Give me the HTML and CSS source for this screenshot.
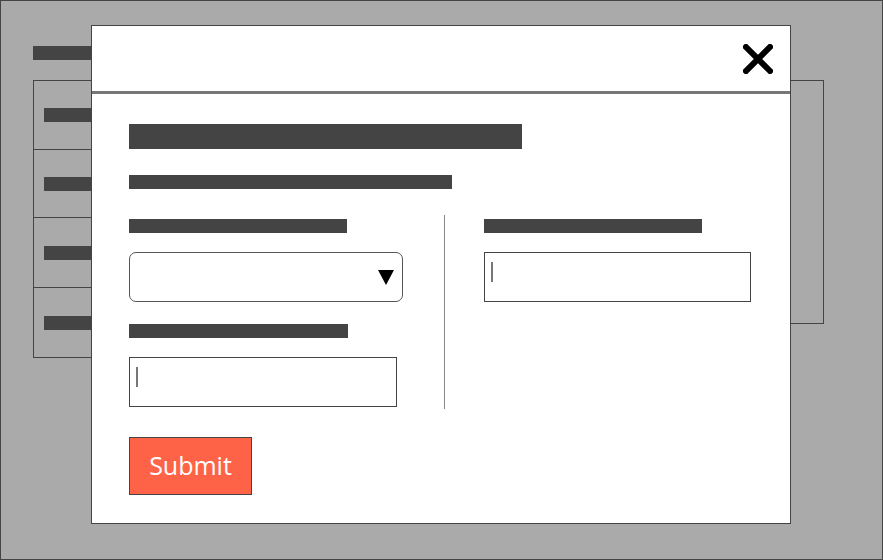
FILE: index.html
```html
<!DOCTYPE html>
<html lang="en">
<head>
<meta charset="utf-8">
<title>Modal form</title>
<link rel="stylesheet" href="styles.css">
</head>
<body>
<div class="screen">
  <div class="page">
    <div class="page-heading"></div>
    <div class="content">
      <div class="table">
        <div class="row r1"><span class="cell-bar"></span></div>
        <div class="row r2"><span class="cell-bar"></span></div>
        <div class="row r3"><span class="cell-bar"></span></div>
        <div class="row r4"><span class="cell-bar"></span></div>
      </div>
      <div class="side-panel"></div>
    </div>
  </div>

  <div class="modal">
    <div class="modal-header">
      <button class="close" aria-label="Close">
        <svg width="30" height="30" viewBox="0 0 30 30"><path d="M3 3 L27 27 M27 3 L3 27" stroke="#000" stroke-width="6" stroke-linecap="square" fill="none"/></svg>
      </button>
    </div>
    <div class="modal-body">
      <div class="title-bar"></div>
      <div class="subtitle-bar"></div>
      <div class="columns">
        <div class="col col-left">
          <div class="label-bar"></div>
          <div class="select">
            <svg class="caret" width="16" height="15" viewBox="0 0 16 15"><polygon points="0,0 16,0 8,15" fill="#000"/></svg>
          </div>
          <div class="label-bar label-2"></div>
          <div class="input input-left"><span class="cursor"></span></div>
        </div>
        <div class="divider"></div>
        <div class="col col-right">
          <div class="label-bar"></div>
          <div class="input input-right"><span class="cursor"></span></div>
        </div>
      </div>
      <button class="submit">Submit</button>
    </div>
  </div>
</div>
</body>
</html>
```

FILE: styles.css
```css
* { box-sizing: border-box; }
html, body { margin: 0; padding: 0; }
body { font-family: "Open Sans", "Noto Sans", sans-serif; }

.screen {
  position: relative;
  width: 883px;
  height: 560px;
  background: #aaaaaa;
  border: 1px solid #444444;
  overflow: hidden;
}

.page {
  padding: 45px 0 0 32px;
}
.page-heading {
  width: 120px;
  height: 14px;
  background: #444444;
}
.content {
  margin-top: 20px;
  width: 791px;
  display: flex;
  justify-content: space-between;
  align-items: flex-start;
}
.table {
  width: 200px;
  border: 1px solid #444444;
  border-top: none;
}
.row {
  display: flex;
  align-items: center;
  padding-left: 10px;
  border-top: 1px solid #444444;
}
.r1 { height: 69px; }
.r2 { height: 68px; }
.r3 { height: 70px; }
.r4 { height: 70px; }
.cell-bar {
  display: block;
  width: 60px;
  height: 14px;
  background: #444444;
}
.side-panel {
  width: 150px;
  height: 244px;
  border: 1px solid #444444;
}

.modal {
  position: absolute;
  left: 90px;
  top: 24px;
  width: 700px;
  height: 499px;
  background: #ffffff;
  border: 1px solid #444444;
}
.modal-header {
  height: 68px;
  border-bottom: 3px solid #777777;
  display: flex;
  align-items: center;
  justify-content: flex-end;
  padding-right: 17px;
}
.close {
  border: none;
  background: none;
  padding: 0;
  width: 30px;
  height: 30px;
  display: block;
}
.close svg { display: block; }

.modal-body {
  padding: 30px 0 0 37px;
}
.title-bar {
  width: 393px;
  height: 25px;
  background: #444444;
}
.subtitle-bar {
  margin-top: 26px;
  width: 323px;
  height: 14px;
  background: #444444;
}
.columns {
  margin-top: 26px;
  display: flex;
}
.col { display: flex; flex-direction: column; }
.col-left { width: 315px; padding-top: 4px; padding-bottom: 2px; }
.col-right { padding-top: 4px; padding-left: 39px; }
.divider {
  width: 1px;
  height: 194px;
  background: #888888;
}
.label-bar {
  width: 218px;
  height: 14px;
  background: #444444;
}
.label-2 { margin-top: 22px; width: 219px; }
.select {
  margin-top: 19px;
  width: 274px;
  height: 50px;
  border: 1px solid #555555;
  border-radius: 7px;
  display: flex;
  align-items: center;
  justify-content: flex-end;
  padding-right: 8px;
}
.caret { display: block; }
.input {
  margin-top: 19px;
  height: 50px;
  border: 1px solid #444444;
  padding: 9px 0 0 6px;
}
.input-left { width: 268px; }
.input-right { width: 267px; }
.cursor {
  display: block;
  width: 2px;
  height: 20px;
  background: #777777;
}

.submit {
  margin-top: 28px;
  width: 123px;
  height: 58px;
  background: #ff6347;
  border: 1px solid #444444;
  color: #ffffff;
  font-family: "Open Sans", "Noto Sans", sans-serif;
  font-size: 25px;
  padding: 0 0 2px 0;
  display: block;
}
```
